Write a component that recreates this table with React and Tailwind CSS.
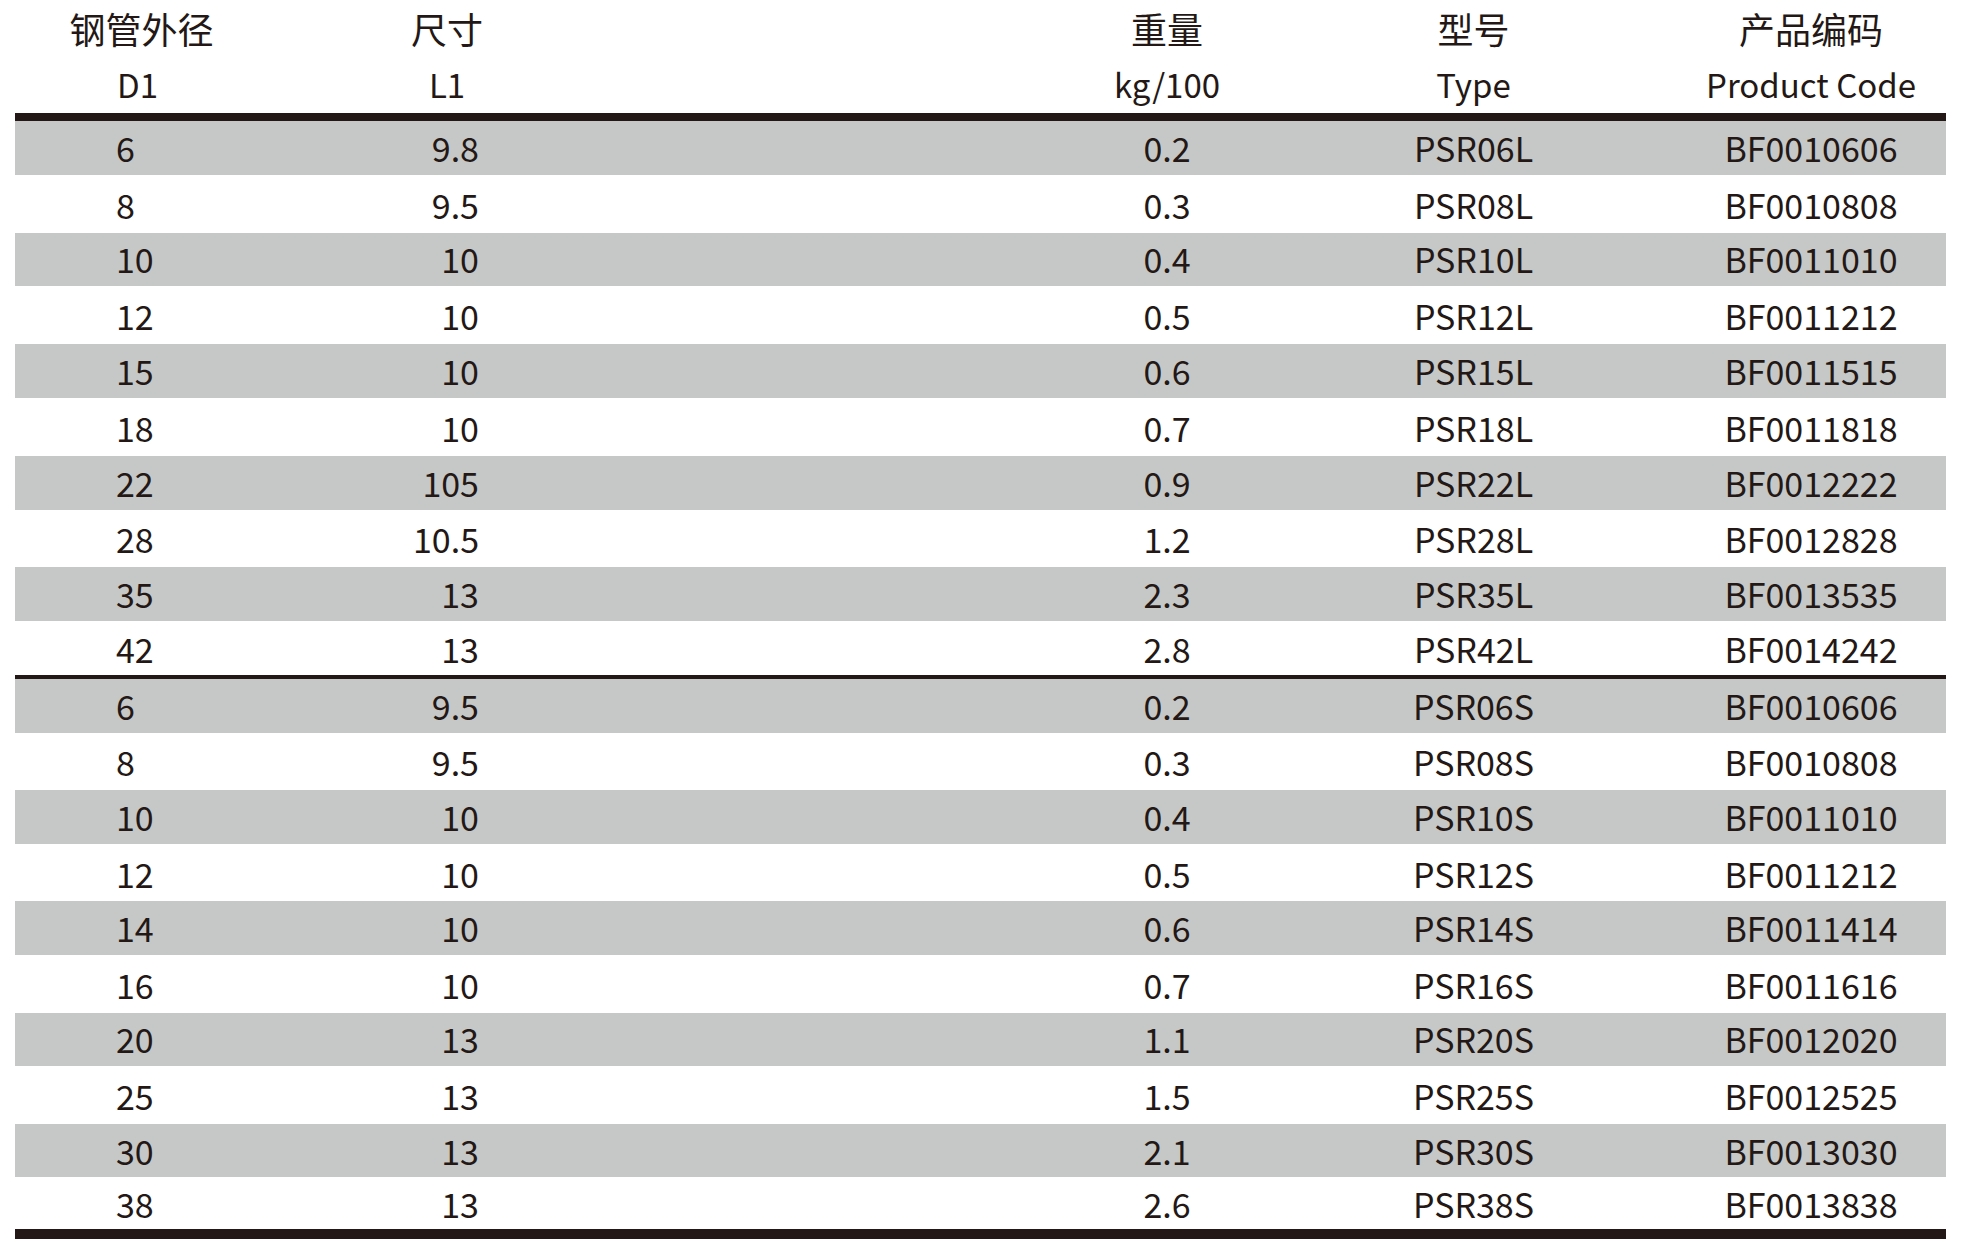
import React from 'react';

const rowsL = [
  ['6', '9.8', '0.2', 'PSR06L', 'BF0010606'],
  ['8', '9.5', '0.3', 'PSR08L', 'BF0010808'],
  ['10', '10', '0.4', 'PSR10L', 'BF0011010'],
  ['12', '10', '0.5', 'PSR12L', 'BF0011212'],
  ['15', '10', '0.6', 'PSR15L', 'BF0011515'],
  ['18', '10', '0.7', 'PSR18L', 'BF0011818'],
  ['22', '105', '0.9', 'PSR22L', 'BF0012222'],
  ['28', '10.5', '1.2', 'PSR28L', 'BF0012828'],
  ['35', '13', '2.3', 'PSR35L', 'BF0013535'],
  ['42', '13', '2.8', 'PSR42L', 'BF0014242'],
];

const rowsS = [
  ['6', '9.5', '0.2', 'PSR06S', 'BF0010606'],
  ['8', '9.5', '0.3', 'PSR08S', 'BF0010808'],
  ['10', '10', '0.4', 'PSR10S', 'BF0011010'],
  ['12', '10', '0.5', 'PSR12S', 'BF0011212'],
  ['14', '10', '0.6', 'PSR14S', 'BF0011414'],
  ['16', '10', '0.7', 'PSR16S', 'BF0011616'],
  ['20', '13', '1.1', 'PSR20S', 'BF0012020'],
  ['25', '13', '1.5', 'PSR25S', 'BF0012525'],
  ['30', '13', '2.1', 'PSR30S', 'BF0013030'],
  ['38', '13', '2.6', 'PSR38S', 'BF0013838'],
];

function Cells({ r }) {
  return (
    <>
      <div className="w-[253px] pl-[101px]">{r[0]}</div>
      <div className="w-[358px] pr-[147px] text-right">{r[1]}</div>
      <div className="ml-[391px] w-[300px] text-center">{r[2]}</div>
      <div className="w-[313px] text-center">{r[3]}</div>
      <div className="ml-[46px] w-[270px] text-center">{r[4]}</div>
    </>
  );
}

export default function App() {
  return (
    <div className="w-[1974px] h-[1245px] bg-white pl-[15px] text-[#231815] font-['Noto_Sans_CJK_SC',sans-serif]">
      <div className="w-[1931px]">
        {/* header */}
        <div className="flex h-[56px] items-center text-[36px] leading-none">
          <div className="w-[253px] text-center">钢管外径</div>
          <div className="w-[358px] text-center">尺寸</div>
          <div className="ml-[391px] w-[300px] text-center">重量</div>
          <div className="w-[313px] text-center">型号</div>
          <div className="ml-[46px] w-[270px] text-center">产品编码</div>
        </div>
        <div className="flex h-[57px] items-center text-[33px] leading-none">
          <div className="w-[253px] pl-[102px]">D1</div>
          <div className="w-[358px] text-center">L1</div>
          <div className="ml-[391px] w-[300px] text-center">kg/100</div>
          <div className="w-[313px] text-center">Type</div>
          <div className="ml-[46px] w-[270px] text-center">Product Code</div>
        </div>
        <div className="h-[8px] bg-[#231815]" />

        {/* L series */}
        {rowsL.map((r, i) => (
          <div
            key={'l' + i}
            className={
              'flex h-[55.8px] items-center text-[34px] leading-none ' +
              (i % 2 === 0 ? 'bg-[#c6c8c7] border-b-2 border-white' : '') +
              (i === rowsL.length - 1 ? ' border-b-4 border-[#231815]' : '')
            }
          >
            <Cells r={r} />
          </div>
        ))}

        {/* S series */}
        {rowsS.map((r, i) => (
          <div
            key={'s' + i}
            className={
              'flex items-center text-[34px] leading-none ' +
              (i === rowsS.length - 1 ? 'h-[49.6px] ' : 'h-[55.6px] ') +
              (i % 2 === 0 ? 'bg-[#c6c8c7] border-b-2 border-white' : '')
            }
          >
            <Cells r={r} />
          </div>
        ))}
        <div className="h-[10px] bg-[#231815]" />
      </div>
    </div>
  );
}
